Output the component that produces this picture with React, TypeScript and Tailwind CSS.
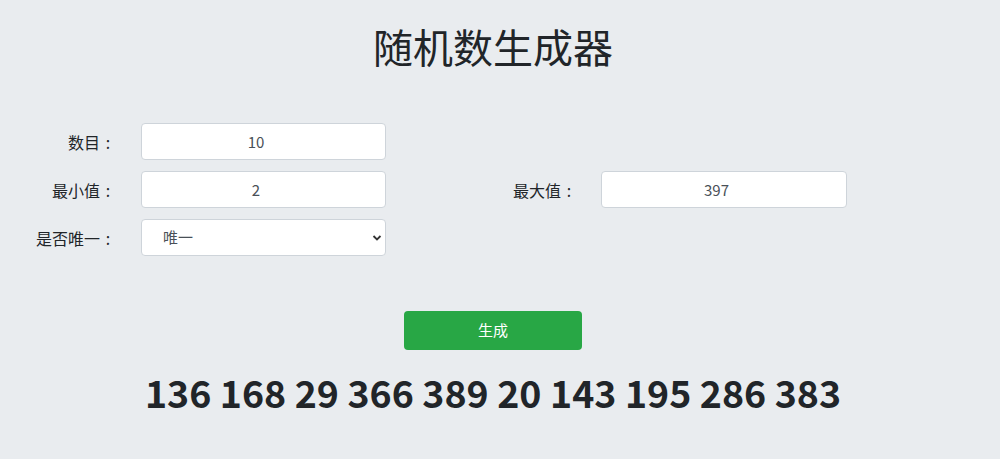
import React, { useState } from 'react';

const font = { fontFamily: '"Microsoft YaHei", "Noto Sans CJK SC", "Noto Sans", sans-serif' };

function Label({ text, w }: { text: string; w: string }) {
  return (
    <label className={`${w} text-right text-[16px]`}>
      {text}
      <span className="inline-block w-[16px] text-center">:</span>
    </label>
  );
}

export default function App() {
  const [count, setCount] = useState('10');
  const [min, setMin] = useState('2');
  const [max, setMax] = useState('397');
  const [unique, setUnique] = useState('1');
  const [nums] = useState([136, 168, 29, 366, 389, 20, 143, 195, 286, 383]);

  const inputCls =
    'h-[37px] w-[245px] rounded-[4px] border border-[#ced4da] bg-white text-[15px] text-[#495057] outline-none';

  return (
    <div style={font} className="min-h-[459px] w-full bg-[#e9ecef] text-[#212529]">
      <h1 className="ml-[-14px] pt-[20px] text-center text-[40px] leading-[52px] font-normal">随机数生成器</h1>

      <div className="mt-[51px] flex flex-col gap-[11px]">
        <div className="flex items-center">
          <Label text="数目" w="w-[116px]" />
          <input className={`ml-[25px] pr-[15px] text-center ${inputCls}`} value={count} onChange={e => setCount(e.target.value)} />
        </div>
        <div className="flex items-center">
          <Label text="最小值" w="w-[116px]" />
          <input className={`ml-[25px] pr-[15px] text-center ${inputCls}`} value={min} onChange={e => setMin(e.target.value)} />
          <Label text="最大值" w="w-[191px]" />
          <input className={`ml-[24px] w-[246px] pr-[15px] text-center ${inputCls}`} value={max} onChange={e => setMax(e.target.value)} />
        </div>
        <div className="flex items-center">
          <Label text="是否唯一" w="w-[116px]" />
          <div className="relative ml-[25px]">
            <select
              className={`appearance-none pl-[21px] text-left ${inputCls}`}
              value={unique}
              onChange={e => setUnique(e.target.value)}
            >
              <option value="1">唯一</option>
              <option value="0">不唯一</option>
            </select>
            <svg className="pointer-events-none absolute right-[4px] top-[15px]" width="10" height="8" viewBox="0 0 10 8">
              <path d="M1.5 2l3.5 3.5L8.5 2" fill="none" stroke="#333" strokeWidth="1.8" />
            </svg>
          </div>
        </div>
      </div>

      <div className="mt-[55px] flex justify-center">
        <button className="ml-[-14px] h-[39px] w-[178px] rounded-[4px] bg-[#28a745] text-[15px] text-white">生成</button>
      </div>

      <div className="mt-[18px] text-center text-[37.5px] leading-[48px] font-bold">
        <span className="ml-[-14px]">{nums.join(' ')}</span>
      </div>
    </div>
  );
}
